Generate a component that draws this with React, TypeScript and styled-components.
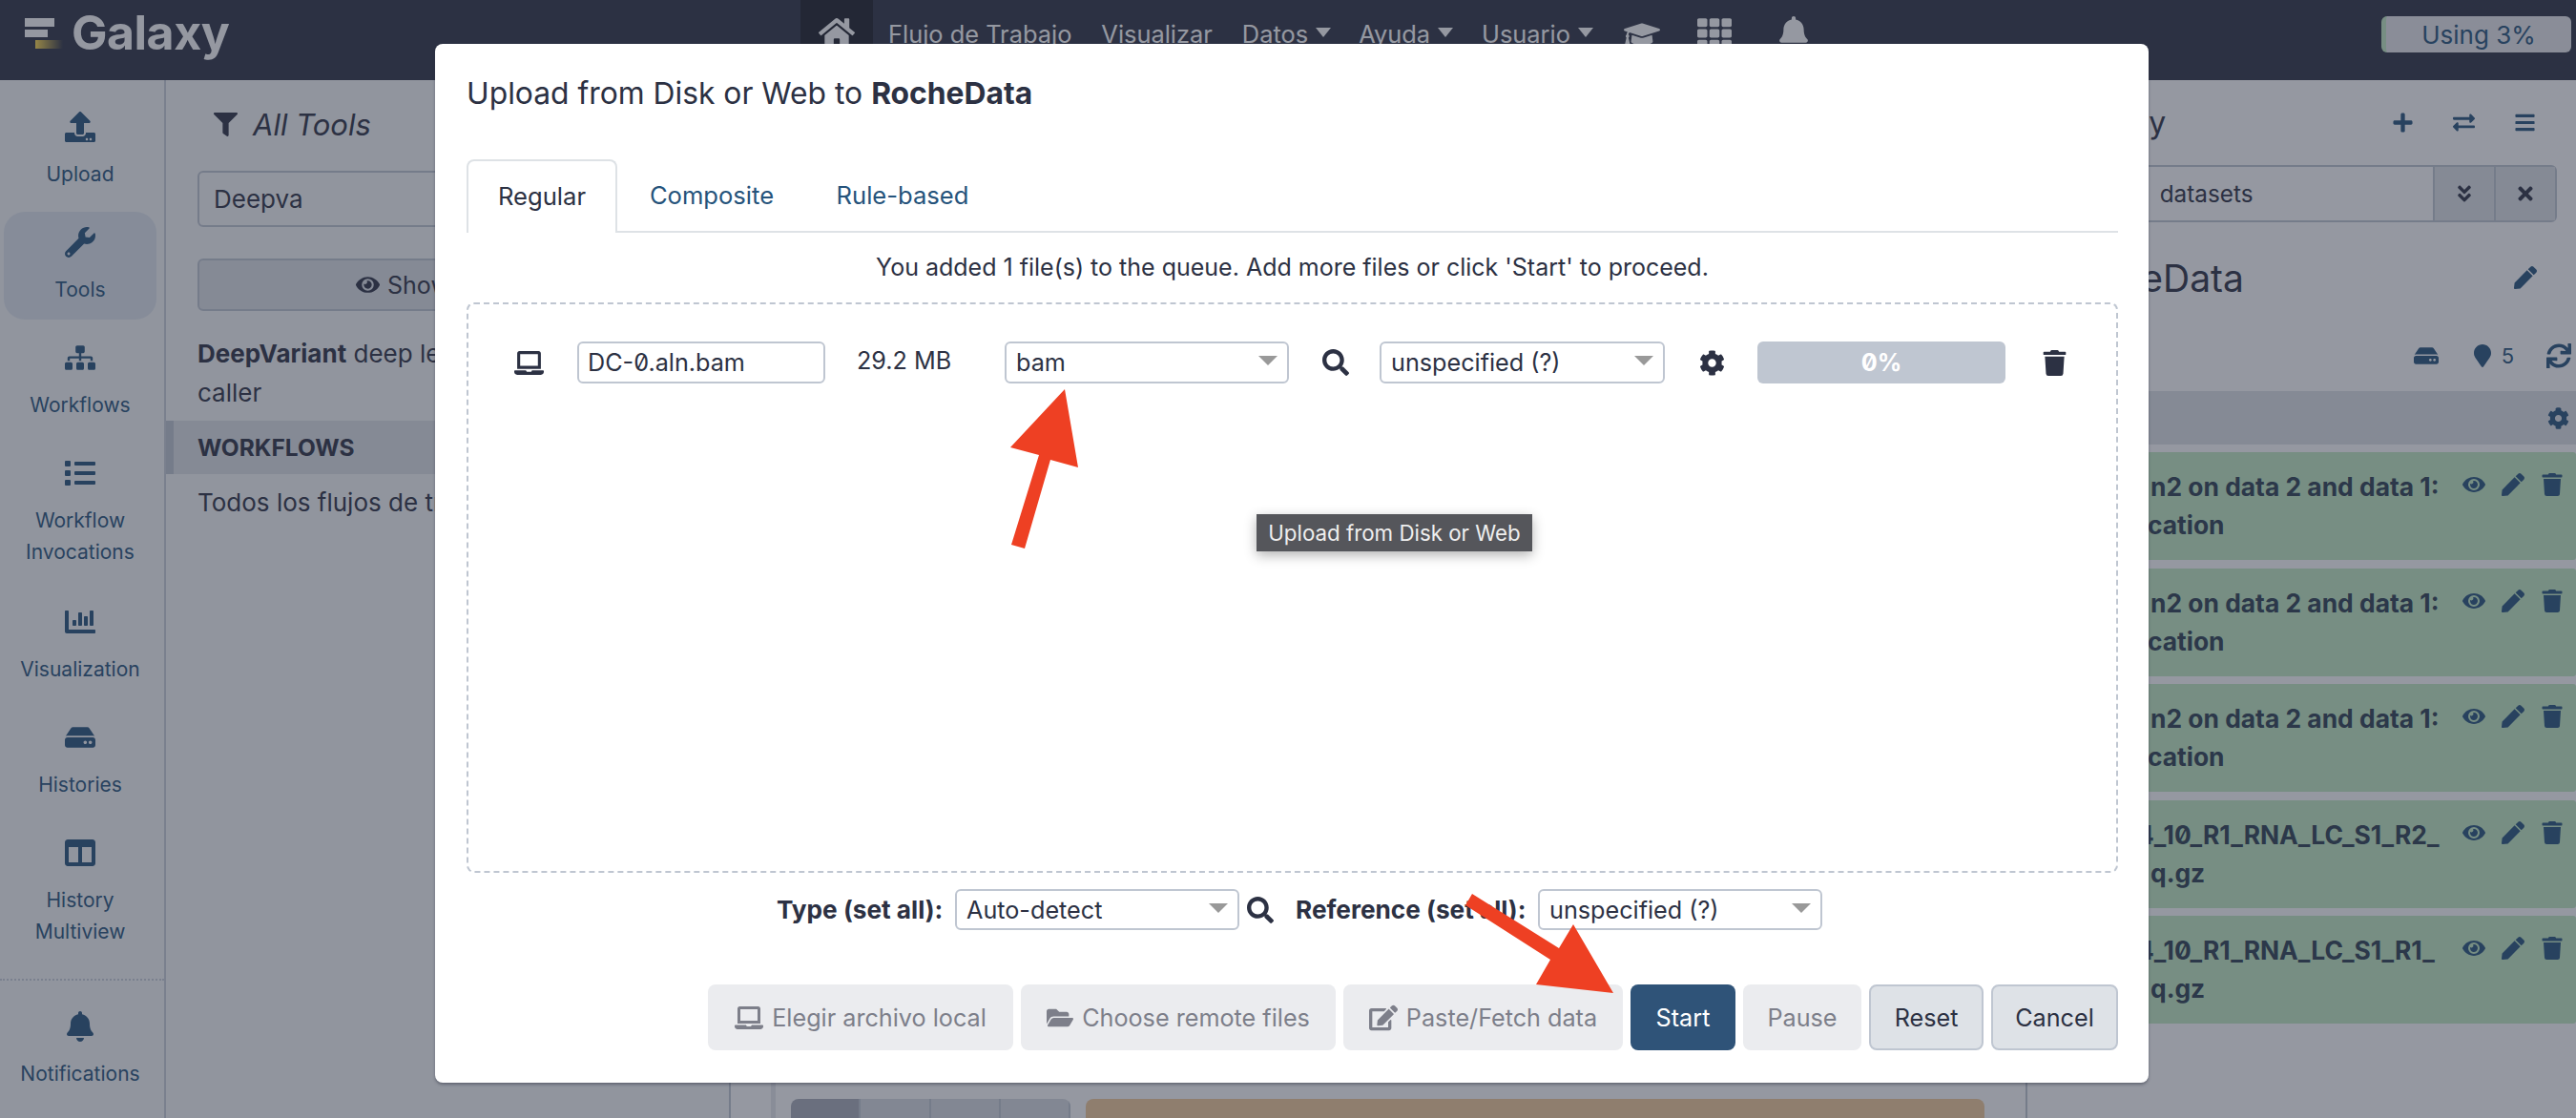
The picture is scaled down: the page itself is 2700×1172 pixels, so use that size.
import React from "react";
import styled, { createGlobalStyle } from "styled-components";
import {
  FaUpload, FaWrench, FaSitemap, FaList, FaChartBar, FaHdd, FaColumns, FaBell, FaFilter, FaEye,
  FaLaptop, FaSearch, FaCog, FaTrash, FaFolderOpen, FaEdit, FaHome, FaGraduationCap, FaTh, FaPlus,
  FaExchangeAlt, FaBars, FaAngleDoubleDown, FaTimes, FaPen, FaMapMarker, FaSync,
} from "react-icons/fa";

const Global = createGlobalStyle`
  html, body { margin: 0; padding: 0; background: #fff; }
  body { font-family: Inter, "Liberation Sans", sans-serif; font-feature-settings: "zero" 1; color: #2c3143; }
  * { box-sizing: border-box; }
`;

const Page = styled.div`
  position: relative;
  width: 2700px;
  height: 1172px;
  overflow: hidden;
  background: #fff;
`;

/* ---------- masthead ---------- */
const Masthead = styled.header`
  height: 84px;
  background: #2c3143;
  display: flex;
  align-items: flex-start;
  color: #fff;
  font-size: 25.4px;
`;
const Brand = styled.div`
  width: 839px;
  height: 84px;
  padding-left: 26px;
  display: flex;
  align-items: flex-start;
`;
const LogoMark = styled.svg`
  width: 40px;
  height: 33px;
  margin-top: 19px;
  flex: none;
`;
const BrandName = styled.span`
  font-size: 50px;
  font-weight: 700;
  letter-spacing: -0.5px;
  line-height: 56px;
  margin: 6px 0 0 9px;
`;
const HomeCell = styled.div`
  width: 76px;
  height: 60px;
  background: #1a1d27;
  display: flex;
  justify-content: center;
  padding-top: 15px;
  font-size: 38px;
`;
const NavItem = styled.span<{ $left: number }>`
  margin-left: ${(p) => p.$left}px;
  line-height: 30px;
  margin-top: 21px;
  display: flex;
  align-items: center;
  white-space: nowrap;
`;
const NavCaret = styled.i`
  width: 0;
  height: 0;
  margin: 0 0 4px 8px;
  border-left: 8px solid transparent;
  border-right: 8px solid transparent;
  border-top: 10px solid #fff;
`;
const NavIcon = styled.span<{ $left: number; $size: number }>`
  margin-left: ${(p) => p.$left}px;
  margin-top: 17px;
  font-size: ${(p) => p.$size}px;
  line-height: 1;
  display: flex;
`;
const Quota = styled.div`
  margin: 17px 5px 0 auto;
  width: 199px;
  height: 38px;
  border-radius: 6px;
  background: #e8e9ed;
  border-left: 5px solid #c2ebc2;
  color: #25537b;
  display: flex;
  align-items: center;
  justify-content: center;
  font-size: 26px;
`;

/* ---------- body columns ---------- */
const Body = styled.div`
  display: flex;
  height: 1088px;
`;
const ActivityBar = styled.nav`
  width: 174px;
  flex: none;
  background: #f7f8f9;
  border-right: 2px solid #c8ced9;
  padding: 17px 4px 0 4px;
  display: flex;
  flex-direction: column;
  align-items: stretch;
`;
const ActivityItem = styled.div<{ $active?: boolean; $double?: boolean }>`
  height: ${(p) => (p.$double ? 148 : 113)}px;
  margin-bottom: 8px;
  width: 160px;
  padding-top: 16px;
  border-radius: 22px;
  background: ${(p) => (p.$active ? "#e0e7ef" : "transparent")};
  color: #25537b;
  display: flex;
  flex-direction: column;
  align-items: center;
`;
const ActivityIcon = styled.div`
  height: 32px;
  margin-bottom: 17px;
  display: flex;
  align-items: center;
  font-size: 32px;
`;
const ActivityLabel = styled.div`
  font-size: 21px;
  line-height: 33px;
  text-align: center;
`;
const Separator = styled.div`
  border-top: 2px dotted #c8ced9;
  margin: 8px -4px 16px -4px;
`;

const ToolPanel = styled.aside`
  width: 590px;
  flex: none;
  background: #f7f8f9;
`;
const PanelTitle = styled.div`
  height: 95px;
  padding: 0 0 2px 50px;
  display: flex;
  align-items: center;
  gap: 16px;
  font-size: 31px;
  font-style: italic;
  svg { font-size: 25px; }
`;
const ToolSearch = styled.div`
  margin: 0 17px 0 33px;
  height: 59px;
  border: 2px solid #bfc6d1;
  border-radius: 6px;
  padding-left: 15px;
  display: flex;
  align-items: center;
  font-size: 26px;
`;
const SectionsButton = styled.div`
  margin: 33px 17px 24px 33px;
  height: 55px;
  border: 2px solid #bfc6d1;
  border-radius: 6px;
  background: #dee2e7;
  display: flex;
  align-items: center;
  justify-content: center;
  gap: 8px;
  font-size: 25px;
`;
const ToolText = styled.div`
  padding: 0 17px 0 33px;
  font-size: 26px;
  line-height: 41px;
  white-space: nowrap;
  b { font-weight: 700; }
`;
const SectionBand = styled.div`
  margin-top: 9px;
  height: 56px;
  background: #dee2e6;
  border-left: 8px solid #bfc6d1;
  padding-left: 25px;
  display: flex;
  align-items: center;
  font-weight: 700;
  font-size: 24.5px;
`;
const SectionLink = styled.div`
  padding: 9px 0 0 33px;
  font-size: 26px;
  line-height: 41px;
  white-space: nowrap;
`;

const Center = styled.main`
  flex: 1;
  min-width: 0;
  background: #fff;
  border-left: 2px solid #bfc6d1;
  padding: 1068px 43px 0 0;
  display: flex;
  align-items: flex-start;
`;
const ScrollEdge = styled.div`
  margin: -1068px 16px 0 42px;
  width: 5px;
  height: 1088px;
  background: #e6e8ec;
  flex: none;
`;
const ViewTabs = styled.div`
  width: 293px;
  height: 60px;
  flex: none;
  display: flex;
  border-radius: 8px 8px 0 0;
  overflow: hidden;
`;
const ViewTab = styled.div<{ $active?: boolean }>`
  flex: 1;
  background: ${(p) => (p.$active ? "#a8adb8" : "#d9dde3")};
  border-right: 2px solid #bfc6d1;
`;
const Notice = styled.div`
  margin-left: 16px;
  flex: 1;
  height: 60px;
  background: #f2cb99;
  border-radius: 8px 8px 0 0;
`;

const History = styled.aside`
  flex: none;
  width: 577px;
  background: #fff;
  border-left: 2px solid #bfc6d1;
  display: flex;
  flex-direction: column;
`;
const HistoryHead = styled.div`
  height: 89px;
  display: flex;
  align-items: center;
  padding: 0 42px 0 37px;
  font-size: 32px;
  color: #2c3143;
`;
const HeadActions = styled.div`
  margin-left: auto;
  display: flex;
  gap: 41px;
  color: #25537b;
  font-size: 23px;
`;
const HistorySearch = styled.div`
  height: 60px;
  margin: 0 20px 0 24px;
  border: 2px solid #bfc6d1;
  border-radius: 6px;
  display: flex;
  align-items: stretch;
`;
const SearchText = styled.div`
  flex: 1;
  padding-left: 18px;
  word-spacing: 10px;
  display: flex;
  align-items: center;
  font-size: 24.3px;
`;
const SearchButton = styled.div`
  width: 64px;
  background: #dee2e7;
  border-left: 2px solid #bfc6d1;
  display: flex;
  align-items: center;
  justify-content: center;
  font-size: 22px;
`;
const HistoryName = styled.div`
  height: 116px;
  display: flex;
  align-items: center;
  padding: 0 41px 0 26px;
  font-size: 39px;
  justify-content: space-between;
  svg { font-size: 24px; color: #25537b; }
`;
const Stats = styled.div`
  height: 61px;
  padding: 0 5px 14px 0;
  display: flex;
  justify-content: flex-end;
  align-items: center;
  color: #25537b;
  font-size: 24px;
`;
const StatIcon = styled.span<{ $left: number; $size: number }>`
  margin-left: ${(p) => p.$left}px;
  font-size: ${(p) => p.$size}px;
  display: flex;
`;
const OperationBand = styled.div`
  height: 56px;
  background: #dee2e6;
  display: flex;
  justify-content: flex-end;
  align-items: center;
  padding-right: 7px;
  color: #25537b;
  font-size: 23px;
  margin-bottom: 8px;
`;
const DatasetList = styled.div`
  display: flex;
  flex-direction: column;
  gap: 8.5px;
`;
const Dataset = styled.div`
  height: 113px;
  background: #c2ebc2;
  padding: 16px 13px 0 0;
  display: flex;
  align-items: flex-start;
  justify-content: space-between;
  border-radius: 3px;
`;
const DatasetName = styled.div`
  font-weight: 700;
  font-size: 26.4px;
  line-height: 40px;
  color: #2c3e50;
  white-space: nowrap;
`;
const NameLine = styled.div<{ $left: number }>`
  padding-left: ${(p) => p.$left}px;
`;
const DatasetActions = styled.div`
  display: flex;
  align-items: center;
  gap: 17px;
  color: #25537b;
  font-size: 24px;
  padding-top: 6px;
`;

/* ---------- modal ---------- */
const Backdrop = styled.div`
  position: absolute;
  inset: 0;
  background: rgba(44, 49, 67, 0.5);
`;
const Modal = styled.section`
  position: absolute;
  left: 456px;
  top: 46px;
  width: 1796px;
  height: 1089px;
  background: #fff;
  border-radius: 8px;
  padding: 27px 32px 0 33px;
  box-shadow: 0 2px 3px rgba(44, 49, 67, 0.45);
  color: #2c3143;
  font-size: 25.2px;
`;
const ModalTitle = styled.h5`
  margin: 0 0 44px;
  font-size: 31.8px;
  font-weight: 400;
  line-height: 50px;
  b { font-weight: 700; }
`;
const TabList = styled.div`
  height: 77px;
  border-bottom: 2px solid #dee2e6;
  display: flex;
`;
const Tab = styled.div<{ $active?: boolean; $width: number }>`
  width: ${(p) => p.$width}px;
  height: ${(p) => (p.$active ? 77 : 75)}px;
  padding-bottom: 2px;
  background: #fff;
  border: 2px solid ${(p) => (p.$active ? "#dee2e6" : "transparent")};
  border-bottom: 0;
  border-radius: 8px 8px 0 0;
  color: ${(p) => (p.$active ? "#2c3143" : "#25537b")};
  display: flex;
  align-items: center;
  justify-content: center;
  font-size: 25.6px;
`;
const Message = styled.div`
  height: 73px;
  display: flex;
  align-items: center;
  justify-content: center;
  padding-bottom: 1px;
  font-size: 25px;
`;
const DropZone = styled.div`
  height: 598px;
  border: 2px dashed #bfc6d1;
  border-radius: 8px;
  padding: 39px 0 0 48px;
`;
const FileRow = styled.div`
  display: flex;
  align-items: center;
  height: 44px;
`;
const IconCell = styled.span<{ $left: number; $size: number }>`
  margin-left: ${(p) => p.$left}px;
  font-size: ${(p) => p.$size}px;
  display: flex;
  flex: none;
  color: #2c3143;
`;
const TextField = styled.div<{ $left: number }>`
  margin-left: ${(p) => p.$left}px;
  width: 260px;
  height: 44px;
  border: 2px solid #bfc6d1;
  border-radius: 6px;
  padding-left: 9px;
  display: flex;
  align-items: center;
`;
const FileSize = styled.div`
  margin-left: 33px;
  width: 155px;
  padding-bottom: 4px;
`;
const Select = styled.div<{ $left?: number; $width?: number; $height?: number }>`
  margin-left: ${(p) => p.$left ?? 0}px;
  width: ${(p) => p.$width ?? 298}px;
  height: ${(p) => p.$height ?? 44}px;
  flex: none;
  border: 2px solid #bfc6d1;
  border-radius: 6px;
  padding: 0 10px 0 10px;
  display: flex;
  align-items: center;
  justify-content: space-between;
`;
const SelectCaret = styled.i`
  width: 0;
  height: 0;
  margin-bottom: 4px;
  border-left: 10px solid transparent;
  border-right: 10px solid transparent;
  border-top: 10px solid #999;
`;
const Progress = styled.div`
  margin-left: 34px;
  width: 260px;
  height: 44px;
  background: #bfc6d1;
  border-radius: 6px;
  color: #fff;
  font-weight: 700;
  display: flex;
  align-items: center;
  justify-content: center;
`;
const SetAllRow = styled.div`
  margin-top: 17px;
  padding-left: 325px;
  height: 43px;
  display: flex;
  align-items: center;
`;
const SetAllLabel = styled.b<{ $left?: number; $width: number }>`
  margin-left: ${(p) => p.$left ?? 0}px;
  width: ${(p) => p.$width}px;
  flex: none;
  font-weight: 700;
  font-size: 26.2px;
  white-space: nowrap;
`;
const Footer = styled.div`
  margin-top: 57px;
  display: flex;
  justify-content: flex-end;
  gap: 8px;
`;
const ActionButton = styled.div<{ $width: number; $kind: "muted" | "primary" | "plain" }>`
  width: ${(p) => p.$width}px;
  height: 69px;
  border-radius: 8px;
  display: flex;
  align-items: center;
  justify-content: center;
  gap: 9px;
  background: ${(p) => (p.$kind === "primary" ? "#2f5378" : p.$kind === "plain" ? "#dee2e7" : "#ebecef")};
  color: ${(p) => (p.$kind === "primary" ? "#fff" : p.$kind === "plain" ? "#2c3143" : "#7d7f8a")};
  border: ${(p) => (p.$kind === "plain" ? "2px solid #bfc6d1" : "0")};
`;
const Tooltip = styled.div`
  position: absolute;
  left: 1317px;
  top: 539px;
  width: 289px;
  height: 39px;
  background: #55565b;
  color: #eee;
  font-size: 22.3px;
  display: flex;
  align-items: center;
  justify-content: center;
  box-shadow: 0 4px 12px rgba(0, 0, 0, 0.3);
`;
const Arrows = styled.svg`
  position: absolute;
  inset: 0;
  width: 2700px;
  height: 1172px;
  pointer-events: none;
`;

const dataRows = [
  { a: "n2 on data 2 and data 1:", al: 129, b: "cation", bl: 126 },
  { a: "n2 on data 2 and data 1:", al: 129, b: "cation", bl: 126 },
  { a: "n2 on data 2 and data 1:", al: 129, b: "cation", bl: 126 },
  { a: "4_10_R1_RNA_LC_S1_R2_", al: 115, b: "q.gz", bl: 129 },
  { a: "4_10_R1_RNA_LC_S1_R1_", al: 115, b: "q.gz", bl: 129 },
];

export default function App() {
  return (
    <Page>
      <Global />
      <Masthead>
        <Brand>
          <LogoMark viewBox="0 0 40 33">
            <defs>
              <linearGradient id="gold" x1="0" x2="1" y1="0" y2="0">
                <stop offset="0" stopColor="#ffd94a" />
                <stop offset="1" stopColor="#ffd94a" stopOpacity="0" />
              </linearGradient>
            </defs>
            <rect x="0" y="0" width="31" height="9" fill="#fff" />
            <rect x="0" y="12" width="24" height="8" fill="#fff" />
            <rect x="11" y="23" width="29" height="9" fill="url(#gold)" />
          </LogoMark>
          <BrandName>Galaxy</BrandName>
        </Brand>
        <HomeCell><FaHome /></HomeCell>
        <NavItem $left={16}>Flujo de Trabajo</NavItem>
        <NavItem $left={31}>Visualizar</NavItem>
        <NavItem $left={31}>Datos<NavCaret /></NavItem>
        <NavItem $left={29}>Ayuda<NavCaret /></NavItem>
        <NavItem $left={30}>Usuario<NavCaret /></NavItem>
        <NavIcon $left={32} $size={38}><FaGraduationCap /></NavIcon>
        <NavIcon $left={39} $size={36}><FaTh /></NavIcon>
        <NavIcon $left={48} $size={34}><FaBell /></NavIcon>
        <Quota>Using 3%</Quota>
      </Masthead>
      <Body>
        <ActivityBar>
          <ActivityItem><ActivityIcon><FaUpload /></ActivityIcon><ActivityLabel>Upload</ActivityLabel></ActivityItem>
          <ActivityItem $active><ActivityIcon><FaWrench /></ActivityIcon><ActivityLabel>Tools</ActivityLabel></ActivityItem>
          <ActivityItem><ActivityIcon><FaSitemap /></ActivityIcon><ActivityLabel>Workflows</ActivityLabel></ActivityItem>
          <ActivityItem $double><ActivityIcon><FaList /></ActivityIcon><ActivityLabel>Workflow<br />Invocations</ActivityLabel></ActivityItem>
          <ActivityItem><ActivityIcon><FaChartBar /></ActivityIcon><ActivityLabel>Visualization</ActivityLabel></ActivityItem>
          <ActivityItem><ActivityIcon><FaHdd /></ActivityIcon><ActivityLabel>Histories</ActivityLabel></ActivityItem>
          <ActivityItem $double><ActivityIcon><FaColumns /></ActivityIcon><ActivityLabel>History<br />Multiview</ActivityLabel></ActivityItem>
          <Separator />
          <ActivityItem><ActivityIcon><FaBell /></ActivityIcon><ActivityLabel>Notifications</ActivityLabel></ActivityItem>
        </ActivityBar>
        <ToolPanel>
          <PanelTitle><FaFilter />All Tools</PanelTitle>
          <ToolSearch>Deepva</ToolSearch>
          <SectionsButton><FaEye />Show Sections</SectionsButton>
          <ToolText><b>DeepVariant</b> deep learning<br />caller</ToolText>
          <SectionBand>WORKFLOWS</SectionBand>
          <SectionLink>Todos los flujos de trabajo</SectionLink>
        </ToolPanel>
        <Center>
          <ScrollEdge />
          <ViewTabs>
            <ViewTab $active /><ViewTab /><ViewTab /><ViewTab />
          </ViewTabs>
          <Notice />
        </Center>
        <History>
          <HistoryHead>
            History
            <HeadActions><FaPlus /><FaExchangeAlt /><FaBars /></HeadActions>
          </HistoryHead>
          <HistorySearch>
            <SearchText>search datasets</SearchText>
            <SearchButton><FaAngleDoubleDown /></SearchButton>
            <SearchButton><FaTimes /></SearchButton>
          </HistorySearch>
          <HistoryName>RocheData<FaPen /></HistoryName>
          <Stats>
            <StatIcon $left={0} $size={26}><FaHdd /></StatIcon>
            <StatIcon $left={34} $size={24}><FaMapMarker /></StatIcon>
            <StatIcon $left={8} $size={22}>5</StatIcon>
            <StatIcon $left={34} $size={26}><FaSync /></StatIcon>
          </Stats>
          <OperationBand><FaCog /></OperationBand>
          <DatasetList>
            {dataRows.map((r, i) => (
              <Dataset key={i}>
                <DatasetName>
                  <NameLine $left={r.al}>{r.a}</NameLine>
                  <NameLine $left={r.bl}>{r.b}</NameLine>
                </DatasetName>
                <DatasetActions><FaEye /><FaPen /><FaTrash /></DatasetActions>
              </Dataset>
            ))}
          </DatasetList>
        </History>
      </Body>
      <Backdrop />
      <Modal>
        <ModalTitle>Upload from Disk or Web to <b>RocheData</b></ModalTitle>
        <TabList>
          <Tab $active $width={158}>Regular</Tab>
          <Tab $width={198}>Composite</Tab>
          <Tab $width={202}>Rule-based</Tab>
        </TabList>
        <Message>You added 1 file(s) to the queue. Add more files or click 'Start' to proceed.</Message>
        <DropZone>
          <FileRow>
            <IconCell $left={0} $size={31}><FaLaptop /></IconCell>
            <TextField $left={35}>DC-0.aln.bam</TextField>
            <FileSize>29.2 MB</FileSize>
            <Select>bam<SelectCaret /></Select>
            <IconCell $left={35} $size={28}><FaSearch /></IconCell>
            <Select $left={32} $width={299}>unspecified (?)<SelectCaret /></Select>
            <IconCell $left={36} $size={27}><FaCog /></IconCell>
            <Progress>0%</Progress>
            <IconCell $left={38} $size={27}><FaTrash /></IconCell>
          </FileRow>
        </DropZone>
        <SetAllRow>
          <SetAllLabel $width={187}>Type (set all):</SetAllLabel>
          <Select $height={43}>Auto-detect<SelectCaret /></Select>
          <IconCell $left={8} $size={28}><FaSearch /></IconCell>
          <SetAllLabel $left={23} $width={254}>Reference (set all):</SetAllLabel>
          <Select $height={43}>unspecified (?)<SelectCaret /></Select>
        </SetAllRow>
        <Footer>
          <ActionButton $width={320} $kind="muted"><FaLaptop size={30} />Elegir archivo local</ActionButton>
          <ActionButton $width={330} $kind="muted"><FaFolderOpen size={28} />Choose remote files</ActionButton>
          <ActionButton $width={293} $kind="muted"><FaEdit size={30} />Paste/Fetch data</ActionButton>
          <ActionButton $width={110} $kind="primary">Start</ActionButton>
          <ActionButton $width={124} $kind="muted">Pause</ActionButton>
          <ActionButton $width={120} $kind="plain">Reset</ActionButton>
          <ActionButton $width={133} $kind="plain">Cancel</ActionButton>
        </Footer>
      </Modal>
      <Tooltip>Upload from Disk or Web</Tooltip>
      <Arrows viewBox="0 0 2700 1172">
        <polygon fill="#ee4023" points="1116,408 1059,469 1089,477 1060,571 1074,575 1101,482 1130,490" />
        <polygon fill="#ee4023" points="1543,937 1536,949 1625,1006 1610,1032 1691,1041 1649,969 1634,994" />
      </Arrows>
    </Page>
  );
}
